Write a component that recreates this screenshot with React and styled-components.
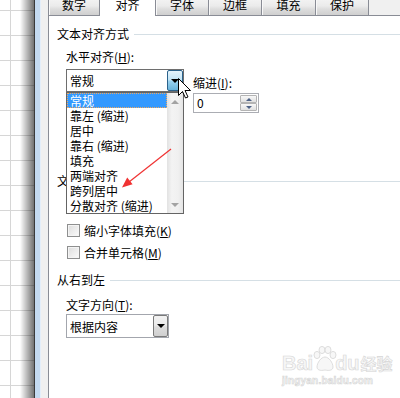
import React from 'react';
import styled, { createGlobalStyle } from 'styled-components';

const GlobalStyle = createGlobalStyle`
  html, body {
    margin: 0;
    padding: 0;
    background: #fff;
    overflow: hidden;
  }
  body {
    font-family: "Noto Sans CJK SC", "Microsoft YaHei", sans-serif;
    font-size: 12px;
    color: #000;
  }
`;

const Screen = styled.div`
  position: relative;
  display: flex;
  width: 400px;
  height: 398px;
  overflow: hidden;
`;

const Sheet = styled.div`
  flex: none;
  width: 34px;
  border-right: 1px solid #3a3a3a;
  background:
    linear-gradient(to right, rgba(0, 0, 0, 0) 20px, rgba(0, 0, 0, 0.55) 34px),
    linear-gradient(to right, transparent 10px, #d6d6d6 10px, #d6d6d6 11px, transparent 11px),
    linear-gradient(to bottom, transparent 10px, #d6d6d6 10px, #d6d6d6 11px, transparent 11px) 0 0 / 100% 25px repeat-y,
    #fff;
`;

const WindowFrame = styled.div`
  flex: none;
  width: 5px;
  background: #c4daf1;
  border-right: 1px solid #e4eef9;
`;

const Dialog = styled.div`
  flex: 1;
  display: flex;
  flex-direction: column;
  padding-left: 7px;
  background: #f0f0f0;
  min-width: 0;
`;

const TabRow = styled.div`
  position: relative;
  z-index: 1;
  display: flex;
  align-items: flex-start;
  height: 15px;
`;

const Tab = styled.div`
  box-sizing: border-box;
  width: ${p => p.$w}px;
  height: ${p => (p.$active ? 16 : 15)}px;
  display: flex;
  justify-content: center;
  align-items: center;
  padding-bottom: ${p => (p.$active ? 6 : 5)}px;
  line-height: 12px;
  border-right: 1px solid #898c95;
  border-left: ${p => (p.$first ? '1px solid #898c95' : 'none')};
  background: ${p =>
    p.$active
      ? '#fff'
      : 'linear-gradient(to bottom, #f2f2f2 0%, #ebebeb 40%, #dddddd 60%, #cfcfcf 100%)'};
  box-shadow: ${p => (p.$active ? 'none' : 'inset 1px 0 #f8f8f8')};
  ${p => p.$active && 'border-left: 1px solid #898c95; margin-left: -1px;'}
`;

const Panel = styled.div`
  flex: 1;
  background: #fff;
  border-top: 1px solid #898c95;
  border-left: 1px solid #898c95;
  padding: 10px 0 0 8px;
`;

const GroupTitle = styled.div`
  display: flex;
  align-items: center;
  gap: 5px;
  height: 16px;
  line-height: 16px;
  margin-top: ${p => p.$mt || 0}px;
  white-space: nowrap;

  &::after {
    content: '';
    flex: 1;
    height: 1px;
    background: #d5dfe5;
  }
`;

const Section = styled.div`
  padding-left: 9px;
`;

const FieldLabel = styled.div`
  height: 16px;
  line-height: 16px;
  margin-top: ${p => p.$mt || 0}px;
  white-space: nowrap;
`;

const Row = styled.div`
  display: flex;
  align-items: flex-start;
  gap: 9px;
  margin-top: 4px;
`;

const Combo = styled.div`
  position: relative;
  box-sizing: border-box;
  display: flex;
  width: ${p => p.$w}px;
  height: ${p => p.$h}px;
  margin-top: ${p => p.$mt || 0}px;
  border: 1px solid ${p => (p.$open ? '#6e6e6e' : '#a3a6ad')};
  background: #fff;
`;

const ComboValue = styled.div`
  flex: 1;
  padding-left: 3px;
  display: flex;
  align-items: center;
  white-space: nowrap;
`;

const ComboButton = styled.div`
  box-sizing: border-box;
  flex: none;
  width: ${p => p.$w}px;
  display: flex;
  align-items: center;
  justify-content: center;
  border: 1px solid ${p => (p.$hot ? '#2c628b' : '#7a7a7a')};
  border-radius: 2px;
  background: ${p =>
    p.$hot
      ? 'linear-gradient(to bottom, #e5f4fc 0%, #c4e5f6 45%, #98d1ef 55%, #68b3db 100%)'
      : 'linear-gradient(to bottom, #f2f2f2 0%, #ebebeb 45%, #dddddd 55%, #cfcfcf 100%)'};

  &::before {
    content: '';
    border-left: 4px solid transparent;
    border-right: 4px solid transparent;
    border-top: 4px solid #000;
  }
`;

const DropList = styled.div`
  position: absolute;
  z-index: 2;
  top: calc(100% + 1px);
  left: -1px;
  right: -1px;
  display: flex;
  border: 1px solid #646464;
  background: #fff;
`;

const Items = styled.div`
  flex: 1;
`;

const Item = styled.div`
  box-sizing: border-box;
  height: 15px;
  line-height: 15px;
  padding-left: 3px;
  white-space: nowrap;
  color: ${p => (p.$selected ? '#fff' : '#000')};
  background: ${p => (p.$selected ? '#3399ff' : 'transparent')};
  outline: ${p => (p.$selected ? '1px dotted #f0a860' : 'none')};
  outline-offset: -1px;
`;

const ScrollBar = styled.div`
  flex: none;
  width: 16px;
  display: flex;
  flex-direction: column;
  justify-content: space-between;
  align-items: center;
  padding: 7px 0 6px;
  box-sizing: border-box;
  background: linear-gradient(to right, #e2e2e2 0%, #f3f3f3 30%, #f0f0f0 70%, #e4e4e4 100%);
`;

const ScrollArrow = styled.span`
  border-left: 4px solid transparent;
  border-right: 4px solid transparent;
  ${p => (p.$up ? 'border-bottom' : 'border-top')}: 4px solid #a3a3a3;
`;

const IndentColumn = styled.div`
  padding-top: 6px;
`;

const Spin = styled.div`
  box-sizing: border-box;
  display: flex;
  width: 66px;
  height: 20px;
  margin-top: 2px;
  border: 1px solid #abadb3;
  background: #fff;
`;

const SpinValue = styled.div`
  flex: 1;
  padding-left: 3px;
  line-height: 18px;
`;

const SpinButtons = styled.div`
  display: flex;
  flex-direction: column;
  width: 17px;
  padding: 1px 1px 1px 0;
`;

const SpinButton = styled.div`
  flex: 1;
  display: flex;
  align-items: center;
  justify-content: center;
  border: 1px solid #b4b4b4;
  border-radius: 1px;
  background: linear-gradient(to bottom, #f8f8f8, #e0e0e0);

  &::before {
    content: '';
    border-left: 3px solid transparent;
    border-right: 3px solid transparent;
    ${p => (p.$up ? 'border-bottom' : 'border-top')}: 3px solid #4d6185;
  }
`;

const CheckRow = styled.label`
  display: flex;
  align-items: center;
  gap: 4px;
  height: 16px;
  margin-top: ${p => p.$mt || 0}px;
  padding-left: 1px;
  white-space: nowrap;
`;

const CheckBox = styled.span`
  box-sizing: border-box;
  width: 13px;
  height: 13px;
  border: 1px solid #8e8f8f;
  background: linear-gradient(to bottom right, #dcdcdc, #fbfbfb);
  box-shadow: inset 0 0 0 1px #f4f4f4;
`;

const Overlay = styled.svg`
  position: absolute;
  left: 0;
  top: 0;
  pointer-events: none;
  z-index: 5;
`;

const Watermark = styled.div`
  position: absolute;
  left: 282px;
  top: 343px;
  display: flex;
  flex-direction: column;
  align-items: flex-start;
  color: #f7f7f7;
  -webkit-text-stroke: 0.6px #d6d6d6;
  font-family: "Liberation Sans", Arial, sans-serif;
  font-weight: bold;
  pointer-events: none;
`;

const MarkTop = styled.div`
  display: flex;
  align-items: flex-end;
  height: 30px;
  font-size: 20px;
  line-height: 20px;
`;

const MarkCjk = styled.span`
  font-family: "Noto Sans CJK SC", sans-serif;
  font-size: 16px;
  margin-left: 1px;
`;

const MarkUrl = styled.div`
  font-size: 10px;
  line-height: 12px;
  margin-top: 2px;
  letter-spacing: 0.2px;
`;

const tabs = [
  { label: '数字', w: 52 },
  { label: '对齐', w: 57, active: true },
  { label: '字体', w: 53 },
  { label: '边框', w: 53 },
  { label: '填充', w: 54 },
  { label: '保护', w: 53 },
];

const options = ['常规', '靠左 (缩进)', '居中', '靠右 (缩进)', '填充', '两端对齐', '跨列居中', '分散对齐 (缩进)'];

function Paw() {
  return (
    <svg width="28" height="28" viewBox="0 0 28 28" style={{ margin: '0 -4px 0 -2px' }}>
      <g fill="#f7f7f7" stroke="#d6d6d6" strokeWidth="0.8">
        <ellipse cx="6" cy="10" rx="3" ry="3.6" />
        <ellipse cx="11" cy="5" rx="3" ry="3.6" />
        <ellipse cx="17" cy="5" rx="3" ry="3.6" />
        <ellipse cx="22" cy="10" rx="3" ry="3.6" />
        <path d="M14 12c-4 0-8 6-8 10 0 3 3 4 8 3 5 1 8 0 8-3 0-4-4-10-8-10z" />
      </g>
    </svg>
  );
}

export default function App() {
  return (
    <Screen>
      <GlobalStyle />
      <Sheet />
      <WindowFrame />
      <Dialog>
        <TabRow>
          {tabs.map((t, i) => (
            <Tab key={t.label} $w={t.w} $active={t.active} $first={i === 0}>
              {t.label}
            </Tab>
          ))}
        </TabRow>
        <Panel>
          <GroupTitle>文本对齐方式</GroupTitle>
          <Section>
            <FieldLabel $mt={7}>
              水平对齐(<u>H</u>):
            </FieldLabel>
            <Row>
              <Combo $w={118} $h={23} $open>
                <ComboValue>常规</ComboValue>
                <ComboButton $w={16} $hot />
                <DropList>
                  <Items>
                    {options.map((o, i) => (
                      <Item key={o} $selected={i === 0}>
                        {o}
                      </Item>
                    ))}
                  </Items>
                  <ScrollBar>
                    <ScrollArrow $up />
                    <ScrollArrow />
                  </ScrollBar>
                </DropList>
              </Combo>
              <IndentColumn>
                <FieldLabel>
                  缩进(<u>I</u>):
                </FieldLabel>
                <Spin>
                  <SpinValue>0</SpinValue>
                  <SpinButtons>
                    <SpinButton $up />
                    <SpinButton />
                  </SpinButtons>
                </Spin>
              </IndentColumn>
            </Row>
          </Section>

          <GroupTitle $mt={60}>文本控制</GroupTitle>
          <Section>
            <CheckRow $mt={33}>
              <CheckBox />
              <span>
                缩小字体填充(<u>K</u>)
              </span>
            </CheckRow>
            <CheckRow $mt={6}>
              <CheckBox />
              <span>
                合并单元格(<u>M</u>)
              </span>
            </CheckRow>
          </Section>

          <GroupTitle $mt={12}>从右到左</GroupTitle>
          <Section>
            <FieldLabel $mt={9}>
              文字方向(<u>T</u>):
            </FieldLabel>
            <Combo $w={103} $h={24} $mt={1}>
              <ComboValue>根据内容</ComboValue>
              <ComboButton $w={15} />
            </Combo>
          </Section>
        </Panel>
      </Dialog>

      <Overlay width="400" height="398" viewBox="0 0 400 398">
        <line x1="171" y1="149" x2="129" y2="182" stroke="#f03232" strokeWidth="1.2" />
        <polygon points="122,187.5 132.6,184.3 127.2,177.5" fill="#f03232" />
        <path
          d="M178.5 78.5 L178.5 95.5 L182.5 91.5 L185.5 98 L188 97 L185 90.5 L190.5 90.5 Z"
          fill="#fff"
          stroke="#000"
          strokeWidth="1"
          strokeLinejoin="miter"
        />
      </Overlay>

      <Watermark>
        <MarkTop>
          Bai
          <Paw />
          du
          <MarkCjk>经验</MarkCjk>
        </MarkTop>
        <MarkUrl>jingyan.baidu.com</MarkUrl>
      </Watermark>
    </Screen>
  );
}
